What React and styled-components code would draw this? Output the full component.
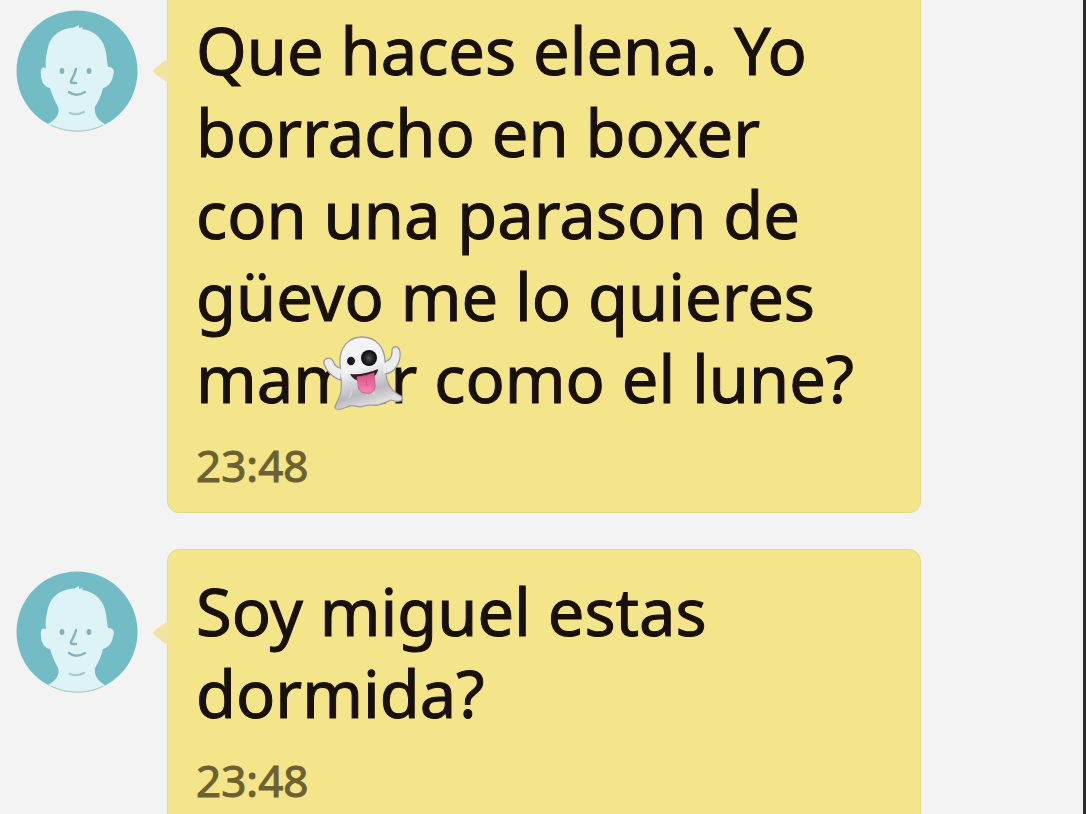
import React from 'react';
import styled, { createGlobalStyle } from 'styled-components';

const GlobalStyle = createGlobalStyle`
    * {
        box-sizing: border-box;
    }

    body {
        margin: 0;
        background: #f3f3f3;
        font-family: "Noto Sans", "Open Sans", sans-serif;
    }
`;

const Screen = styled.main`
    height: 100vh;
    overflow: hidden;
    background: #f3f3f3;
    border-right: 3px solid #2b2d2e;
`;

const MessageList = styled.ol`
    display: flex;
    flex-direction: column;
    gap: 36px;
    margin: 0;
    padding: 0 162px 0 16px;
    list-style: none;
`;

const Message = styled.li`
    display: grid;
    grid-template-columns: 122px minmax(0, 1fr);
    column-gap: 29px;
    align-items: start;
`;

const AvatarIcon = styled.svg`
    display: block;
    width: 122px;
    height: 122px;
    margin-top: ${props => props.$continued ? '10px' : '22px'};
`;

const Bubble = styled.article`
    position: relative;
    padding: ${props => props.$continued ? '9px' : '20px'} 40px 17px 28px;
    background: #f4e48a;
    border: 1px solid #e6d78f;
    border-width: ${props => props.$continued ? '0 1px 1px' : '1px'};
    border-radius: ${props => props.$continued ? '0 0 12px 12px' : '12px'};
`;

const Tail = styled.svg`
    position: absolute;
    top: ${props => props.$continued ? '58px' : '70px'};
    left: -15px;
    width: 16px;
    height: 26px;
`;

const Text = styled.p`
    margin: 0;
    color: #17100c;
    font-size: 65px;
    line-height: 82px;
    -webkit-text-stroke: 1px currentColor;
`;

const Time = styled.time`
    display: block;
    margin-top: 16px;
    color: #6b6132;
    font-size: 44px;
    line-height: 60px;
    -webkit-text-stroke: 1px currentColor;
`;

const Covered = styled.span`
    position: relative;
    white-space: nowrap;
`;

const GhostIcon = styled.svg`
    position: absolute;
    right: 14px;
    bottom: 10px;
    width: 80px;
    height: 76px;
`;

const Avatar = ({ id, continued }) => (
    <AvatarIcon viewBox="0 0 122 122" $continued={continued} aria-hidden="true">
        <defs>
            <clipPath id={`face-${id}`}>
                <circle cx="61" cy="61" r="60.5" />
            </clipPath>
        </defs>
        <circle cx="61" cy="61" r="60.5" fill="#74bcc5" />
        <g clipPath={`url(#face-${id})`}>
            <path
                d="M31 42 C33 27 42 20 54 18 C58 18 61 16 63 15 L63 18 L67 17 L66 19 C80 21 88 30 90 43 C91 48 91 53 92 57 C97 57 99 60 97 66 C96 72 92 77 87 78 C85 86 82 92 79 97 C78 105 82 110 90 115 L100 126 L20 126 L32 114 C41 109 44 103 42 97 C39 91 36 85 34 78 C28 77 25 71 25 65 C24 59 26 56 30 58 C29 52 30 47 31 42 Z"
                fill="#def3f6"
            />
            <g fill="none" stroke="#83b4ba" strokeLinecap="round" strokeWidth="2.4">
                <path d="M60 59 C59 64 57 67 55 71 C54 73 57 73 60 73" />
                <path d="M53 82 C58 86 64 85 69 82" />
                <path d="M54 103 C59 105 64 104 68 102" stroke="#a3cbd0" />
            </g>
            <ellipse cx="46" cy="61" rx="2.4" ry="3" fill="#86b3b8" />
            <ellipse cx="73" cy="61" rx="2.4" ry="3" fill="#86b3b8" />
        </g>
        <path d="M35 115 C51 123 72 123 87 115" fill="none" stroke="#a9c8cb" />
    </AvatarIcon>
);

const Ghost = () => (
    <GhostIcon viewBox="0 0 80 76" role="img" aria-label="Ghost">
        <defs>
            <linearGradient id="ghost-body" x1="0" y1="0" x2="0.3" y2="1">
                <stop offset="0" stopColor="#f4f4f5" />
                <stop offset="0.5" stopColor="#f2f2f4" />
                <stop offset="0.82" stopColor="#b9b9bf" />
                <stop offset="1" stopColor="#dededf" />
            </linearGradient>
            <linearGradient id="ghost-tongue" x1="0" y1="0" x2="0" y2="1">
                <stop offset="0" stopColor="#d75087" />
                <stop offset="1" stopColor="#fa86b6" />
            </linearGradient>
            <radialGradient id="ghost-eye">
                <stop offset="0" stopColor="#55565a" />
                <stop offset="0.5" stopColor="#27282b" />
                <stop offset="1" stopColor="#08090a" />
            </radialGradient>
        </defs>
        <path
            d="M18 44 C9 42 3 34 1 28 C0 22 7 20 10 25 C12 31 15 32 19 32 Z M61 26 C66 25 69 21 69 16 C68 9 76 9 77 16 C78 26 72 37 62 38 Z"
            fill="#ededee"
            stroke="#9b9b9d"
            strokeWidth="1.3"
        />
        <path
            d="M17 28 C16 11 26 1 39 1 C54 1 61 12 62 24 L63 38 C64 48 68 55 78 60 C82 64 77 67 68 64 C63 66 58 69 54 69 C49 70 46 68 41 70 C35 73 31 68 27 70 C22 71 18 75 13 73 C10 71 15 66 17 59 C20 50 18 38 17 28 Z"
            fill="url(#ghost-body)"
            stroke="#9d9da0"
            strokeWidth="1.3"
        />
        <path d="M18 33 L20 43 M62 27 L62 37" stroke="#eeeeef" strokeWidth="3" />
        <path d="M26 62 C30 56 29 51 27 47 M52 62 C51 56 48 55 47 51" fill="none" stroke="#d1d1d5" strokeWidth="2" />
        <ellipse cx="28" cy="25" rx="4" ry="4.3" fill="#17181a" />
        <ellipse cx="46" cy="22" rx="8" ry="8" fill="url(#ghost-eye)" />
        <path d="M27 38 C36 39 46 37 55 33 C55 39 47 45 40 45 C34 46 29 42 27 38 Z" fill="#302025" />
        <path
            d="M34 41 C40 40 46 39 51 37 L52 48 C53 56 47 58 43 57 C37 57 35 53 35 48 Z"
            fill="url(#ghost-tongue)"
            stroke="#c65080"
            strokeWidth="0.8"
        />
        <path d="M43 43 L44 50" stroke="#ce5386" strokeWidth="1" />
    </GhostIcon>
);

const messages = [
    {
        id: 1,
        continued: true,
        text: (
            <>
                Que haces elena. Yo borracho en boxer con una parason de güevo me lo
                quieres <Covered>mamar<Ghost /></Covered> como el lune?
            </>
        ),
        time: '23:48',
    },
    {
        id: 2,
        continued: false,
        text: 'Soy miguel estas dormida?',
        time: '23:48',
    },
];

export default function App() {
    return (
        <>
            <GlobalStyle />
            <Screen>
                <MessageList>
                    {messages.map(({ id, continued, text, time }) =>
                        <Message key={id}>
                            <Avatar id={id} continued={continued} />
                            <Bubble $continued={continued}>
                                <Tail viewBox="0 0 16 26" $continued={continued} aria-hidden="true">
                                    <path d="M16 0 L2 10 Q-1 13 2 16 L16 26 Z" fill="#f4e3a0" />
                                </Tail>
                                <Text>{text}</Text>
                                <Time dateTime={time}>{time}</Time>
                            </Bubble>
                        </Message>
                    )}
                </MessageList>
            </Screen>
        </>
    );
}
